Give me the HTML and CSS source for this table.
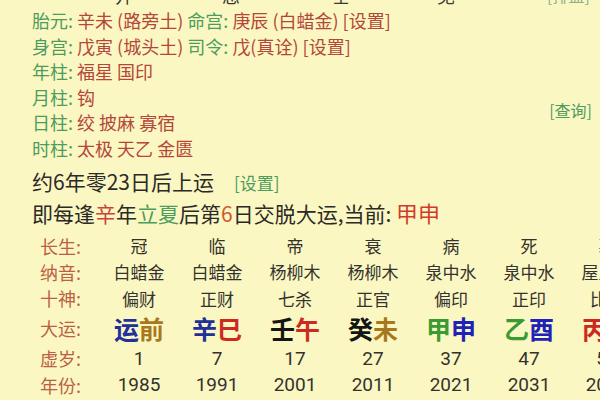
FILE: index.html
```html
<!DOCTYPE html>
<html lang="zh">
<head>
<meta charset="utf-8">
<link rel="stylesheet" href="styles.css">
</head>
<body>
<div class="page">
  <div class="sliver">
    <div class="sliver-row">
      <span class="sl">并</span><span class="sl">忌</span><span class="sl">壬</span><span class="sl">见</span><span class="sl sl-link">[排盘]</span>
    </div>
  </div>

  <div class="info">
    <div class="line"><span class="k">胎元:</span> <span class="v">辛未 (路旁土)</span> <span class="k">命宫:</span> <span class="v">庚辰 (白蜡金) [设置]</span></div>
    <div class="line"><span class="k">身宫:</span> <span class="v">戊寅 (城头土)</span> <span class="k">司令:</span> <span class="v">戊(真诠) [设置]</span></div>
    <div class="line"><span class="k">年柱:</span> <span class="v">福星 国印</span></div>
    <div class="line line-flex"><span><span class="k">月柱:</span> <span class="v">钩</span></span><span class="query">[查询]</span></div>
    <div class="line"><span class="k">日柱:</span> <span class="v">绞 披麻 寡宿</span></div>
    <div class="line"><span class="k">时柱:</span> <span class="v">太极 天乙 金匮</span></div>
  </div>

  <div class="big-line start">约6年零23日后上运<span class="set">[设置]</span></div>
  <div class="big-line every">即每逢<span class="red">辛</span>年<span class="grn">立夏</span>后第<span class="org">6</span>日交脱大运,当前: <span class="cur">甲申</span></div>

  <div class="table">
    <div class="lbl">长生:</div>
    <div class="c">冠</div><div class="c">临</div><div class="c">帝</div><div class="c">衰</div><div class="c">病</div><div class="c">死</div><div class="c">墓</div>

    <div class="lbl">纳音:</div>
    <div class="c">白蜡金</div><div class="c">白蜡金</div><div class="c">杨柳木</div><div class="c">杨柳木</div><div class="c">泉中水</div><div class="c">泉中水</div><div class="c">屋上土</div>

    <div class="lbl">十神:</div>
    <div class="c">偏财</div><div class="c">正财</div><div class="c">七杀</div><div class="c">正官</div><div class="c">偏印</div><div class="c">正印</div><div class="c">比肩</div>

    <div class="lbl">大运:</div>
    <div class="c dy"><span class="blue">运</span><span class="gold">前</span></div>
    <div class="c dy"><span class="blue">辛</span><span class="crim">巳</span></div>
    <div class="c dy"><span class="blk">壬</span><span class="crim">午</span></div>
    <div class="c dy"><span class="blk">癸</span><span class="gold">未</span></div>
    <div class="c dy"><span class="green">甲</span><span class="navy">申</span></div>
    <div class="c dy"><span class="green">乙</span><span class="navy">酉</span></div>
    <div class="c dy"><span class="crim">丙</span><span class="crim">戌</span></div>

    <div class="lbl">虚岁:</div>
    <div class="c num">1</div><div class="c num">7</div><div class="c num">17</div><div class="c num">27</div><div class="c num">37</div><div class="c num">47</div><div class="c num">57</div>

    <div class="lbl">年份:</div>
    <div class="c num">1985</div><div class="c num">1991</div><div class="c num">2001</div><div class="c num">2011</div><div class="c num">2021</div><div class="c num">2031</div><div class="c num">2041</div>
  </div>
</div>
</body>
</html>
```

FILE: styles.css
```css
html, body {
  margin: 0;
  padding: 0;
}
body {
  width: 600px;
  height: 400px;
  overflow: hidden;
  background: #fbf7c3;
  font-family: "Noto Sans CJK SC", "Noto Sans", sans-serif;
  color: #2b2a26;
}
.page {
  padding-left: 32px;
  width: 568px;
}

.sliver {
  height: 8px;
  overflow: hidden;
}
.sliver-row {
  display: grid;
  grid-template-columns: 107px 110px 105px 110px 60px;
  margin-top: -18px;
  margin-left: 83px;
  font-size: 18px;
  line-height: 26px;
  color: #3a3a34;
}
.sl { text-align: left; }
.sl-link { color: #8fae8a; font-size: 16px; }

.info {
  font-size: 18px;
}
.line {
  height: 25.6px;
  line-height: 25px;
  white-space: nowrap;
}
.line-flex {
  display: flex;
  justify-content: space-between;
}
.k { color: #4c9c5e; }
.v { color: #b4463a; }
.query {
  align-self: flex-end;
  margin-bottom: -13px;
  margin-right: 8px;
  font-size: 16px;
  color: #4c9c5e;
}

.big-line {
  font-size: 21px;
  white-space: nowrap;
  color: #2b2a26;
}
.start {
  margin-top: 4px;
  height: 30px;
  line-height: 30px;
}
.every {
  height: 32px;
  line-height: 32px;
}
.set {
  font-size: 17px;
  color: #4c9c5e;
  margin-left: 20px;
}
.red { color: #c9453a; }
.grn { color: #4c9c5e; }
.org { color: #cf5a2e; }
.cur {
  font-size: 22px;
  color: #d23b2c;
}

.table {
  margin-top: 5px;
  margin-left: 8px;
  display: grid;
  grid-template-columns: 60px repeat(7, 78px);
  grid-template-rows: 26px 26px 27px 32px 29px 24px;
  align-items: center;
  white-space: nowrap;
}
.lbl {
  font-size: 18px;
  color: #bb6043;
}
.c {
  text-align: center;
  font-size: 17px;
  color: #33322d;
}
.num {
  font-size: 19px;
  font-family: Roboto, "Noto Sans", sans-serif;
}
.dy {
  font-size: 25px;
  font-weight: 700;
  line-height: 32px;
}
.blue { color: #22309a; }
.navy { color: #1e22b8; }
.gold { color: #a8781e; }
.crim { color: #cc2a20; }
.blk { color: #151515; }
.green { color: #3a9a34; }
```
